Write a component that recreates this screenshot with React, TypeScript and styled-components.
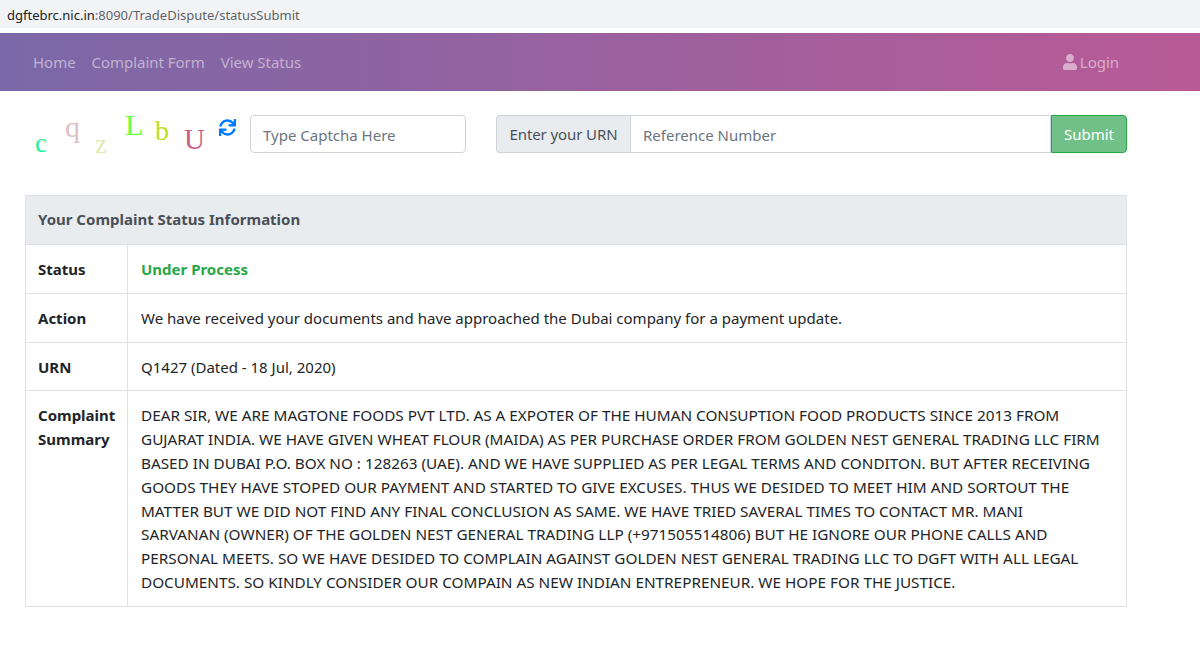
import React from 'react';
import styled, { createGlobalStyle } from 'styled-components';
import { FaSync, FaUser } from 'react-icons/fa';

const GlobalStyle = createGlobalStyle`
  html, body { margin: 0; padding: 0; background: #fff; }
  body {
    font-family: "Noto Sans", "Open Sans", sans-serif;
    font-size: 15px;
    color: #212529;
    overflow: hidden;
  }
`;

const Page = styled.div`
  width: 1200px;
  height: 660px;
  overflow: hidden;
`;

const AddressBar = styled.div`
  height: 28px;
  margin-bottom: 5px;
  padding: 2px 0 0 7px;
  box-sizing: border-box;
  background: #f1f3f4;
  display: flex;
  align-items: center;
  font-size: 13px;
  color: #5f6368;
`;

const Host = styled.span`
  color: #202124;
`;

const Navbar = styled.nav`
  height: 58px;
  padding: 0 81px 0 33px;
  display: flex;
  align-items: center;
  justify-content: space-between;
  background: linear-gradient(90deg, #7b68a8 0%, #b95a96 100%);
`;

const NavLinks = styled.div`
  display: flex;
  gap: 16px;
`;

const NavLink = styled.a`
  display: inline-flex;
  align-items: center;
  gap: 2px;
  color: rgba(255, 255, 255, 0.5);
  font-size: 15px;
  letter-spacing: -0.03px;
  margin-top: -1px;
`;

const Toolbar = styled.div`
  height: 104px;
  padding: 24px 73px 0 35px;
  box-sizing: border-box;
  display: flex;
  align-items: flex-start;
`;

const Captcha = styled.div`
  width: 184px;
  height: 40px;
  display: flex;
  font-family: "Liberation Serif", serif;
`;

const CaptchaLetter = styled.span<{ $width: number; $top: number; $size: number; $color: string }>`
  width: ${(p) => p.$width}px;
  margin-top: ${(p) => p.$top}px;
  font-size: ${(p) => p.$size}px;
  line-height: 1;
  color: ${(p) => p.$color};
`;

const RefreshIcon = styled(FaSync)`
  width: 17px;
  height: 17px;
  margin-top: 4px;
  margin-right: 14px;
  flex: none;
  color: #007bff;
`;

const TextBox = styled.div<{ $width?: number; $joined?: boolean }>`
  box-sizing: border-box;
  height: 38px;
  padding: 2px 12px 0;
  display: flex;
  align-items: center;
  flex: none;
  width: ${(p) => (p.$width ? `${p.$width}px` : 'auto')};
  background: #fff;
  border: 1px solid #ced4da;
  border-radius: ${(p) => (p.$joined ? '0' : '4px')};
  color: #6c757d;
  font-size: 15px;
`;

const InputGroup = styled.div`
  margin-left: 30px;
  display: flex;
`;

const GroupLabel = styled.div`
  box-sizing: border-box;
  width: 134px;
  height: 38px;
  display: flex;
  align-items: center;
  justify-content: center;
  background: #e9ecef;
  border: 1px solid #ced4da;
  border-right: 0;
  border-radius: 4px 0 0 4px;
  color: #495057;
  font-size: 15px;
  letter-spacing: -0.1px;
`;

const SubmitButton = styled.button`
  box-sizing: border-box;
  width: 76px;
  height: 38px;
  padding: 0;
  background: #70c087;
  border: 1px solid #28a745;
  border-radius: 0 4px 4px 0;
  color: #fff;
  font-family: inherit;
  font-size: 15px;
`;

const StatusTable = styled.table`
  width: 1102px;
  margin-left: 25px;
  border-collapse: collapse;
  table-layout: fixed;
  font-size: 15px;
  line-height: 23.8px;
`;

const LabelColumn = styled.col`
  width: 102px;
`;

const HeadCell = styled.th`
  padding: 12px;
  height: 24px;
  background: #e9ecef;
  border: 1px solid #dee2e6;
  color: #495057;
  text-align: left;
  font-weight: 700;
`;

const LabelCell = styled.td`
  padding: 13px 12px 11px;
  border: 1px solid #dee2e6;
  font-weight: 700;
  vertical-align: top;
`;

const ValueCell = styled.td`
  padding: 13px 12px 11px 13px;
  border: 1px solid #dee2e6;
  vertical-align: top;
`;

const StatusText = styled.span`
  color: #28a745;
  font-weight: 700;
`;

const SummaryLine = styled.div`
  white-space: nowrap;
  font-size: 15.3px;
`;

const letters = [
  { ch: 'c', width: 30, top: 15, size: 27, color: '#19f59a' },
  { ch: 'q', width: 30, top: -3, size: 30, color: '#e0c0c4' },
  { ch: 'z', width: 30, top: 16, size: 27, color: '#dfeab0' },
  { ch: 'L', width: 30, top: -5, size: 30, color: '#66ff44' },
  { ch: 'b', width: 29, top: 2, size: 28, color: '#bce01a' },
  { ch: 'U', width: 35, top: 10, size: 29, color: '#c9607f' },
];

const summary = [
  'DEAR SIR, WE ARE MAGTONE FOODS PVT LTD. AS A EXPOTER OF THE HUMAN CONSUPTION FOOD PRODUCTS SINCE 2013 FROM',
  'GUJARAT INDIA. WE HAVE GIVEN WHEAT FLOUR (MAIDA) AS PER PURCHASE ORDER FROM GOLDEN NEST GENERAL TRADING LLC FIRM',
  'BASED IN DUBAI P.O. BOX NO : 128263 (UAE). AND WE HAVE SUPPLIED AS PER LEGAL TERMS AND CONDITON. BUT AFTER RECEIVING',
  'GOODS THEY HAVE STOPED OUR PAYMENT AND STARTED TO GIVE EXCUSES. THUS WE DESIDED TO MEET HIM AND SORTOUT THE',
  'MATTER BUT WE DID NOT FIND ANY FINAL CONCLUSION AS SAME. WE HAVE TRIED SAVERAL TIMES TO CONTACT MR. MANI',
  'SARVANAN (OWNER) OF THE GOLDEN NEST GENERAL TRADING LLP (+971505514806) BUT HE IGNORE OUR PHONE CALLS AND',
  'PERSONAL MEETS. SO WE HAVE DESIDED TO COMPLAIN AGAINST GOLDEN NEST GENERAL TRADING LLC TO DGFT WITH ALL LEGAL',
  'DOCUMENTS. SO KINDLY CONSIDER OUR COMPAIN AS NEW INDIAN ENTREPRENEUR. WE HOPE FOR THE JUSTICE.',
];

const App: React.FC = () => {
  return (
    <Page>
      <GlobalStyle />
      <AddressBar>
        <Host>dgftebrc.nic.in</Host>:8090/TradeDispute/statusSubmit
      </AddressBar>
      <Navbar>
        <NavLinks>
          <NavLink>Home</NavLink>
          <NavLink>Complaint Form</NavLink>
          <NavLink>View Status</NavLink>
        </NavLinks>
        <NavLink>
          <FaUser size={16} />
          Login
        </NavLink>
      </Navbar>
      <Toolbar>
        <Captcha>
          {letters.map((l) => (
            <CaptchaLetter key={l.ch} $width={l.width} $top={l.top} $size={l.size} $color={l.color}>
              {l.ch}
            </CaptchaLetter>
          ))}
        </Captcha>
        <RefreshIcon />
        <TextBox $width={216}>Type Captcha Here</TextBox>
        <InputGroup>
          <GroupLabel>Enter your URN</GroupLabel>
          <TextBox $width={421} $joined>Reference Number</TextBox>
          <SubmitButton>Submit</SubmitButton>
        </InputGroup>
      </Toolbar>
      <StatusTable>
        <colgroup>
          <LabelColumn />
          <col />
        </colgroup>
        <thead>
          <tr>
            <HeadCell colSpan={2}>Your Complaint Status Information</HeadCell>
          </tr>
        </thead>
        <tbody>
          <tr>
            <LabelCell>Status</LabelCell>
            <ValueCell><StatusText>Under Process</StatusText></ValueCell>
          </tr>
          <tr>
            <LabelCell>Action</LabelCell>
            <ValueCell>We have received your documents and have approached the Dubai company for a payment update.</ValueCell>
          </tr>
          <tr>
            <LabelCell>URN</LabelCell>
            <ValueCell>Q1427 (Dated - 18 Jul, 2020)</ValueCell>
          </tr>
          <tr>
            <LabelCell>Complaint Summary</LabelCell>
            <ValueCell>
              {summary.map((line) => (
                <SummaryLine key={line}>{line}</SummaryLine>
              ))}
            </ValueCell>
          </tr>
        </tbody>
      </StatusTable>
    </Page>
  );
};

export default App;
